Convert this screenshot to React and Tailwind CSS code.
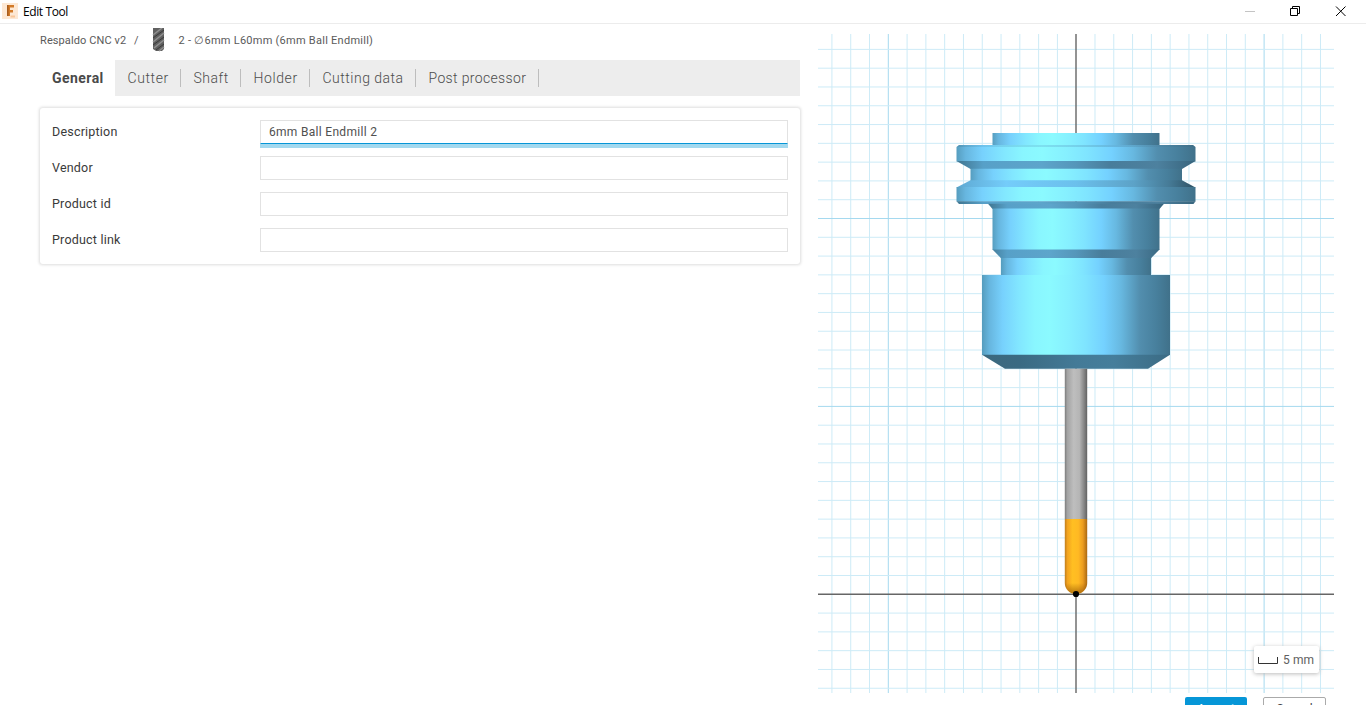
import React from "react";

const STEP = 18.79;
const verticals = Array.from({ length: 27 }, (_, i) => i - 13);
const horizontals = Array.from({ length: 36 }, (_, i) => i - 30);

const BODY_STOPS = [
  [0, "#559cbd"], [0.04, "#67b6df"], [0.11, "#77d1fd"], [0.2, "#82e7ff"], [0.28, "#89f6ff"], [0.36, "#8bfaff"],
  [0.46, "#86f0ff"], [0.55, "#7fe4ff"], [0.65, "#74d1ff"], [0.74, "#67b8e0"],
  [0.84, "#528eae"], [0.93, "#477f9c"], [1, "#40718a"],
];
const DARK_STOPS = [
  [0, "#427a96"], [0.1, "#57a0c8"], [0.35, "#5da5cb"], [0.5, "#5596ba"], [0.65, "#487d9b"], [0.85, "#4d819f"], [1, "#396780"],
];

function Gradient({ id, stops, x1, x2 }) {
  return (
    <linearGradient id={id} gradientUnits="userSpaceOnUse" x1={x1} x2={x2} y1="0" y2="0">
      {stops.map(([o, c]) => <stop key={o} offset={o} stopColor={c} />)}
    </linearGradient>
  );
}

function ToolPreview() {
  return (
    <svg className="block h-[659px] w-[516px]" viewBox="818 34 516 659">
      <defs>
        <Gradient id="flange" stops={BODY_STOPS} x1={956} x2={1195.5} />
        <Gradient id="groove" stops={BODY_STOPS} x1={970} x2={1182} />
        <Gradient id="neck" stops={BODY_STOPS} x1={992} x2={1160} />
        <Gradient id="waist" stops={BODY_STOPS} x1={1001} x2={1151} />
        <Gradient id="nut" stops={BODY_STOPS} x1={982} x2={1170} />
        <Gradient id="dark" stops={DARK_STOPS} x1={960} x2={1192} />
        <Gradient id="darkNeck" stops={DARK_STOPS} x1={990} x2={1162} />
        <Gradient id="under" x1={982} x2={1170} stops={[[0, "#3b687e"], [0.2, "#3a6a82"], [0.5, "#437a97"], [0.7, "#457e9b"], [1, "#3b6b84"]]} />
        <Gradient id="upper" x1={960} x2={1192} stops={[[0, "#5fabd5"], [0.2, "#74ccfa"], [0.5, "#6bc0ec"], [0.75, "#5ca2c7"], [0.9, "#467b97"], [1, "#2f566a"]]} />
        <Gradient id="steel" x1={1064.5} x2={1087.5} stops={[[0, "#777"], [0.12, "#a3a3a3"], [0.4, "#bebebe"], [0.65, "#b5b5b5"], [0.85, "#858585"], [1, "#5e5e5e"]]} />
        <Gradient id="gold" x1={1064.5} x2={1087.5} stops={[[0, "#ba7a1d"], [0.13, "#f3a31f"], [0.35, "#ffbf22"], [0.6, "#ffb923"], [0.8, "#eb9c20"], [1, "#a56411"]]} />
        <linearGradient id="tipShade" x1="0" x2="0" y1="0" y2="1">
          <stop offset="0" stopColor="#8a4c00" stopOpacity="0" />
          <stop offset="1" stopColor="#8a4c00" stopOpacity="0.65" />
        </linearGradient>
      </defs>
      {verticals.map((i) => i !== 0 && (
        <line key={i} x1={1076.2 + i * STEP} x2={1076.2 + i * STEP} y1="34" y2="693" stroke={i % 10 ? "#cdebf7" : "#a5d9ef"} />
      ))}
      {horizontals.map((i) => i !== 0 && (
        <line key={i} x1="818" x2="1334" y1={594.3 + i * STEP} y2={594.3 + i * STEP} stroke={i % 10 ? "#cdebf7" : "#a5d9ef"} />
      ))}
      <path d="M1076 34V693M818 594.2H1334" stroke="#666" strokeWidth="1.4" />
      <path d="M992.5 133H1159.5V146H992.5Z" fill="url(#neck)" />
      <path d="M956.5 147L959 145H1193L1195.5 147V161.5H956.5Z" fill="url(#flange)" />
      <path d="M959 145H1193L1195 147H957Z" fill="url(#dark)" opacity=".3" />
      <path d="M956.5 161H1195.5L1182 169H970.5Z" fill="url(#dark)" />
      <path d="M970.5 168.7H1182V181H970.5Z" fill="url(#groove)" />
      <path d="M970.5 180.3H1182L1195.5 187.5H956.5Z" fill="url(#upper)" />
      <path d="M956.5 187H1195.5V201.5H956.5Z" fill="url(#flange)" />
      <path d="M956.5 201.3H1195.5L1193.5 204H959Z" fill="url(#dark)" />
      <path d="M988 203.7H1164L1159.5 209H992.5Z" fill="url(#darkNeck)" />
      <path d="M992.5 208.6H1159.5V250H992.5Z" fill="url(#neck)" />
      <path d="M992.5 249.5H1159.5L1151 258.2H1001Z" fill="url(#darkNeck)" />
      <path d="M1001 258H1151V275.5H1001Z" fill="url(#waist)" />
      <path d="M982 275H1170V355H982Z" fill="url(#nut)" />
      <path d="M982 354.7H1170L1148 368.8H1005Z" fill="url(#under)" />
      <path d="M1064.8 368.8H1087.2V519H1064.8Z" fill="url(#steel)" />
      <path d="M1064.8 519H1087.2V583A11.2 11 0 0 1 1064.8 583Z" fill="url(#gold)" />
      <path d="M1064.8 583H1087.2A11.2 11 0 0 1 1064.8 583Z" fill="url(#tipShade)" />
      <circle cx="1076" cy="594" r="3.1" fill="#000" />
    </svg>
  );
}

function Field({ label, value, focused }) {
  return (
    <div className="flex h-6 items-center">
      <label className="w-[208px] text-[12.5px] leading-6 tracking-[0.2px] text-[#3a3a3a]">{label}</label>
      <div className={focused
        ? "h-6 flex-1 border border-b-[#0696d7] border-[#e2e2e2] pl-2 text-[12px] leading-[22px] tracking-[0.3px] text-[#505050] shadow-[0_4px_0_#a3d9ef]"
        : "h-6 flex-1 border border-[#e2e2e2]"}>{value}</div>
    </div>
  );
}

const tabs = [
  ["Cutter", "w-[66px] tracking-[0.6px]"], ["Shaft", "w-[60px] tracking-[0.5px]"], ["Holder", "w-[69px] tracking-[0.6px]"],
  ["Cutting data", "w-[106px] tracking-[0.5px]"], ["Post processor", "w-[123px] tracking-[0.35px]"],
];

export default function App() {
  return (
    <div className="flex h-[705px] w-[1366px] flex-col overflow-hidden bg-white font-['Roboto','Noto_Sans',sans-serif]">
      <header className="flex h-6 shrink-0 items-center border-b border-[#ececec] pl-[2px]">
        <svg className="-mt-px h-4 w-4" viewBox="0 0 16 16">
          <path d="M0 0h16v16H0z" fill="#fde8d4" />
          <path d="M5 2h7v2.500H8V7h3v2.500H8V13H5z" fill="#d27a28" />
          <path d="M5 2h1.500v11H5z" fill="#a85d1e" />
          <path d="M8.500 12.500h4.500v2H8.500z" fill="#f8c79a" />
        </svg>
        <span className="ml-[5px] font-['Open_Sans',sans-serif] text-[12px] tracking-[-0.4px] text-black">Edit Tool</span>
        <svg className="ml-auto h-[22px] w-[122px]" viewBox="1244 0 122 22" fill="none">
          <path d="M1245 10.5h10" stroke="#c4c4c4" />
          <path d="M1290.500 7.500h7v7h-7zM1292.500 7.500v-2h7v7h-2" stroke="#000" />
          <path d="M1336 5.500l9.500 9.500M1345.500 5.500l-9.500 9.500" stroke="#000" />
        </svg>
      </header>
      <div className="flex min-h-0 flex-1">
        <main className="ml-10 w-[760px]">
          <div className="flex h-9 items-center text-[11px] text-[#5a5a5a]">
            <span className="-mt-px w-[94px] tracking-[0.1px]">Respaldo CNC v2</span>
            <span className="-mt-px w-[18px]">/</span>
            <svg className="-mt-1 h-6 w-[14px]" viewBox="0 0 14 24">
              <path d="M1 0h11v21l-2 2H4l-3-2z" fill="#606060" />
              <path d="M1 7l9-7M1 14L12 5M2 20l10-8M7 23l5-4" stroke="#909090" strokeWidth="1.5" />
              <path d="M1 10L12 2M1 17l11-8M4 22l8-6" stroke="#3a3a3a" strokeWidth="1" />
            </svg>
            <span className="-mt-px ml-[12.500px] tracking-[0.26px]">2 - ∅6mm L60mm (6mm Ball Endmill)</span>
          </div>
          <nav className="flex h-9 bg-[#ededed] text-[14px] leading-9 text-[#4c4c4c]">
            <div className="w-[75px] bg-white pl-3 font-bold tracking-[0.45px] text-[#4a4a4a]">General</div>
            {tabs.map(([name, sizing]) => (
              <div key={name} className={`${sizing} flex items-center justify-between whitespace-nowrap pl-[12.500px] font-light`}>
                {name}<span className="h-[18px] w-px bg-[#bdbdbd]" />
              </div>
            ))}
          </nav>
          <section className="mt-3 flex h-[156px] flex-col gap-3 rounded-[3px] p-3 shadow-[0_0_3px_0.5px_#dedede]">
            <Field label="Description" value="6mm Ball Endmill 2" focused />
            <Field label="Vendor" />
            <Field label="Product id" />
            <Field label="Product link" />
          </section>
        </main>
        <aside className="relative ml-[18px] w-[516px] pt-[10px]">
          <ToolPreview />
          <div className="absolute top-[622px] left-[436px] flex h-[27px] w-[65px] items-center rounded-[2px] bg-white pl-1 text-[12px] text-[#606060] shadow-[0_1px_4px_#bbb]">
            <svg className="mt-[2px] h-[7px] w-5" viewBox="0 0 20 7" fill="none"><path d="M.5 0v6.500h19V0" stroke="#333" /></svg>
            <span className="ml-[5px] whitespace-nowrap tracking-[0.1px]">5 mm</span>
          </div>
          <div className="ml-[367px] flex gap-4 pt-1 text-[12px] leading-[22px]">
            <button className="h-6 w-[62px] shrink-0 rounded-[2px] bg-[#0696d7] font-medium text-white">Accept</button>
            <button className="h-6 w-[63px] shrink-0 rounded-[2px] border border-[#aaa] bg-white text-[#444]">Cancel</button>
          </div>
        </aside>
      </div>
    </div>
  );
}
